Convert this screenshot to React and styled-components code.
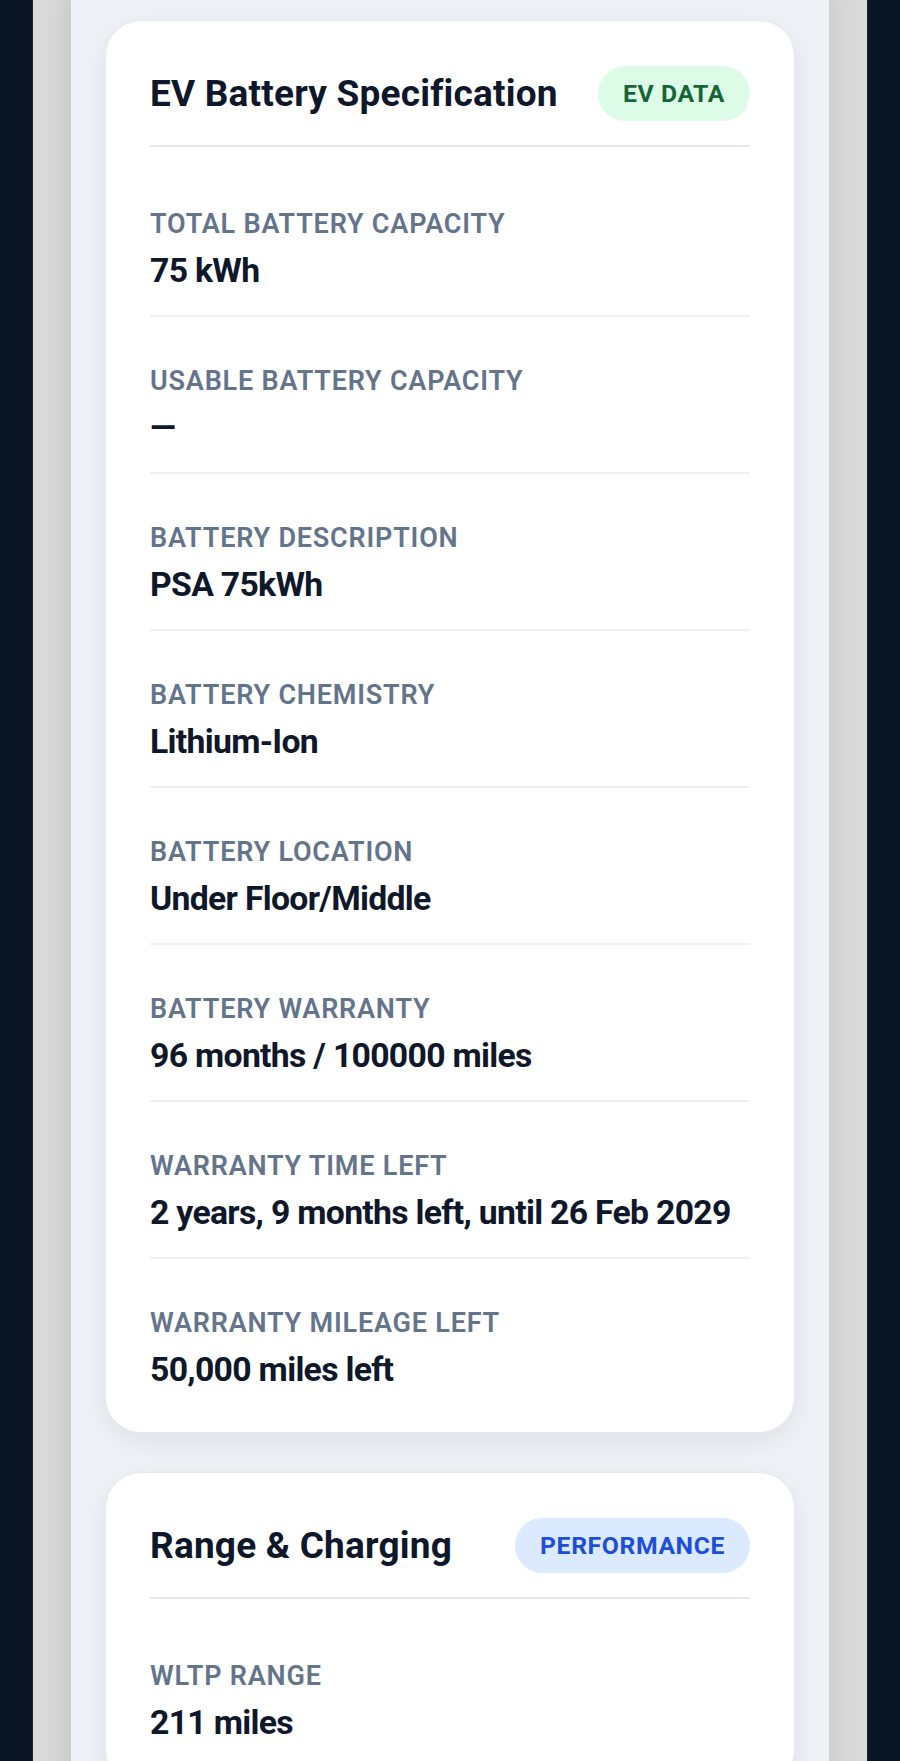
import styled, { createGlobalStyle } from "styled-components";

const GlobalStyle = createGlobalStyle`
  * {
    box-sizing: border-box;
  }
  html,
  body {
    margin: 0;
    padding: 0;
    background: #0b1624;
    font-family: Roboto, "Liberation Sans", sans-serif;
  }
`;

const Frame = styled.div`
  margin: 0 32px;
  min-height: 100vh;
  padding: 0 38px;
  background: linear-gradient(90deg, #dcdcdc 0%, #d4d4d4 4%, #d6d6d6 96%, #dadada 100%);
  border-left: 1px solid #1a2636;
  border-right: 1px solid #1a2636;
`;

const Screen = styled.main`
  min-height: 100vh;
  padding: 20px 34px 40px;
  background: #eef1f5;
  box-shadow: 0 0 18px rgba(0, 0, 0, 0.08);
  display: flex;
  flex-direction: column;
  gap: 39px;
`;

const Card = styled.section`
  background: #ffffff;
  border: 1px solid #e6eaf0;
  border-radius: 36px;
  padding: 45px 44px 18px;
  box-shadow: 0 8px 28px rgba(15, 23, 42, 0.07);
`;

const CardHeader = styled.header`
  display: flex;
  align-items: center;
  justify-content: space-between;
  padding-bottom: 24px;
  margin-bottom: 13px;
  border-bottom: 2px solid #e5e9ee;
`;

const Title = styled.h2`
  margin: 0;
  font-size: 37px;
  font-weight: 700;
  letter-spacing: 0.2px;
  color: #0f172a;
`;

const tones = {
  green: { bg: "#dcfce7", fg: "#166534" },
  blue: { bg: "#dbeafe", fg: "#1d4ed8" },
};

const Badge = styled.span`
  display: inline-flex;
  align-items: center;
  height: 55px;
  padding: 0 25px;
  border-radius: 28px;
  font-size: 24.75px;
  font-weight: 700;
  letter-spacing: 0.6px;
  background: ${(p) => tones[p.$tone].bg};
  color: ${(p) => tones[p.$tone].fg};
`;

const SpecList = styled.dl`
  margin: 0;
`;

const SpecRow = styled.div`
  padding: 46px 0 21px;
  border-bottom: 2px solid #eef0f3;
  &:last-child {
    border-bottom: none;
  }
`;

const Label = styled.dt`
  margin: 0 0 3px;
  font-size: 27px;
  line-height: 1.4;
  font-weight: 600;
  letter-spacing: 0.8px;
  text-transform: uppercase;
  color: #64748b;
`;

const Value = styled.dd`
  margin: 0;
  font-size: 33.75px;
  line-height: 1.4;
  font-weight: 700;
  letter-spacing: -0.7px;
  color: #0f172a;
`;

const battery = [
  ["Total Battery Capacity", "75 kWh"],
  ["Usable Battery Capacity", "—"],
  ["Battery Description", "PSA 75kWh"],
  ["Battery Chemistry", "Lithium-Ion"],
  ["Battery Location", "Under Floor/Middle"],
  ["Battery Warranty", "96 months / 100000 miles"],
  ["Warranty Time Left", "2 years, 9 months left, until 26 Feb 2029"],
  ["Warranty Mileage Left", "50,000 miles left"],
];

const range = [["WLTP Range", "211 miles"]];

function SpecCard({ title, badge, tone, rows }) {
  return (
    <Card>
      <CardHeader>
        <Title>{title}</Title>
        <Badge $tone={tone}>{badge}</Badge>
      </CardHeader>
      <SpecList>
        {rows.map(([label, value]) => (
          <SpecRow key={label}>
            <Label>{label}</Label>
            <Value>{value}</Value>
          </SpecRow>
        ))}
      </SpecList>
    </Card>
  );
}

export default function App() {
  return (
    <>
      <GlobalStyle />
      <Frame>
        <Screen>
          <SpecCard title="EV Battery Specification" badge="EV DATA" tone="green" rows={battery} />
          <SpecCard title="Range & Charging" badge="PERFORMANCE" tone="blue" rows={range} />
        </Screen>
      </Frame>
    </>
  );
}
